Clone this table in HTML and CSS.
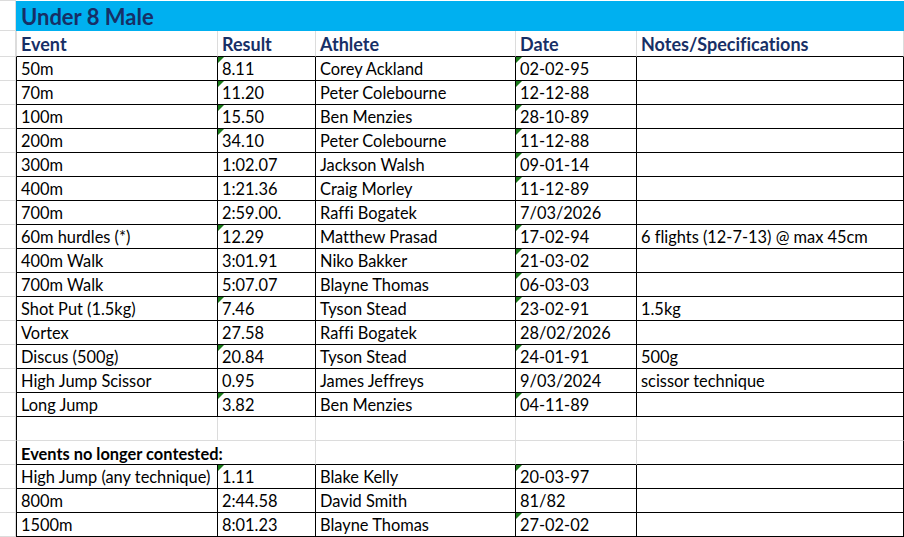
FILE: index.html
```html
<!DOCTYPE html>
<html>
<head>
<meta charset="utf-8">
<link rel="stylesheet" href="styles.css">
</head>
<body>
<div class="sheet">
  <div class="strip top"></div>
  <div class="title">Under 8 Male</div>

  <div class="strip"></div>
  <div class="hd first">Event</div>
  <div class="hd">Result</div>
  <div class="hd">Athlete</div>
  <div class="hd">Date</div>
  <div class="hd last">Notes/Specifications</div>

  <div class="strip"></div><div class="c first">50m</div><div class="c tri">8.11</div><div class="c">Corey Ackland</div><div class="c tri">02-02-95</div><div class="c last"></div>
  <div class="strip"></div><div class="c first">70m</div><div class="c tri">11.20</div><div class="c">Peter Colebourne</div><div class="c tri">12-12-88</div><div class="c last"></div>
  <div class="strip"></div><div class="c first">100m</div><div class="c tri">15.50</div><div class="c">Ben Menzies</div><div class="c tri">28-10-89</div><div class="c last"></div>
  <div class="strip"></div><div class="c first">200m</div><div class="c tri">34.10</div><div class="c">Peter Colebourne</div><div class="c tri">11-12-88</div><div class="c last"></div>
  <div class="strip"></div><div class="c first">300m</div><div class="c">1:02.07</div><div class="c">Jackson Walsh</div><div class="c tri">09-01-14</div><div class="c last"></div>
  <div class="strip"></div><div class="c first">400m</div><div class="c">1:21.36</div><div class="c">Craig Morley</div><div class="c tri">11-12-89</div><div class="c last"></div>
  <div class="strip"></div><div class="c first">700m</div><div class="c">2:59.00.</div><div class="c">Raffi Bogatek</div><div class="c">7/03/2026</div><div class="c last"></div>
  <div class="strip"></div><div class="c first">60m hurdles (*)</div><div class="c tri">12.29</div><div class="c">Matthew Prasad</div><div class="c tri">17-02-94</div><div class="c last">6 flights (12-7-13) @ max 45cm</div>
  <div class="strip"></div><div class="c first">400m Walk</div><div class="c">3:01.91</div><div class="c">Niko Bakker</div><div class="c tri">21-03-02</div><div class="c last"></div>
  <div class="strip"></div><div class="c first">700m Walk</div><div class="c">5:07.07</div><div class="c">Blayne Thomas</div><div class="c tri">06-03-03</div><div class="c last"></div>
  <div class="strip"></div><div class="c first">Shot Put (1.5kg)</div><div class="c tri">7.46</div><div class="c">Tyson Stead</div><div class="c tri">23-02-91</div><div class="c last">1.5kg</div>
  <div class="strip"></div><div class="c first">Vortex</div><div class="c">27.58</div><div class="c">Raffi Bogatek</div><div class="c">28/02/2026</div><div class="c last"></div>
  <div class="strip"></div><div class="c first">Discus (500g)</div><div class="c tri">20.84</div><div class="c">Tyson Stead</div><div class="c tri">24-01-91</div><div class="c last">500g</div>
  <div class="strip"></div><div class="c first">High Jump Scissor</div><div class="c">0.95</div><div class="c">James Jeffreys</div><div class="c">9/03/2024</div><div class="c last">scissor technique</div>
  <div class="strip"></div><div class="c first">Long Jump</div><div class="c tri">3.82</div><div class="c">Ben Menzies</div><div class="c tri">04-11-89</div><div class="c last"></div>

  <div class="strip"></div><div class="e first"></div><div class="e"></div><div class="e"></div><div class="e"></div><div class="e last"></div>

  <div class="strip"></div><div class="sub first">Events no longer contested:</div><div class="sub g"></div><div class="sub g"></div><div class="sub g last"></div>

  <div class="strip"></div><div class="c first">High Jump (any technique)</div><div class="c tri">1.11</div><div class="c">Blake Kelly</div><div class="c tri">20-03-97</div><div class="c last"></div>
  <div class="strip"></div><div class="c first">800m</div><div class="c">2:44.58</div><div class="c">David Smith</div><div class="c">81/82</div><div class="c last"></div>
  <div class="strip"></div><div class="c first">1500m</div><div class="c">8:01.23</div><div class="c">Blayne Thomas</div><div class="c tri">27-02-02</div><div class="c last"></div>
</div>
</body>
</html>
```

FILE: styles.css
```css
* { box-sizing: border-box; }
html, body { margin: 0; padding: 0; background: #fff; }
body {
  font-family: Lato, "Open Sans", sans-serif;
  color: #000;
  font-variant-ligatures: none;
}

.sheet {
  display: grid;
  grid-template-columns: 16px 201px 98px 200px 121px 268px;
  grid-auto-rows: 24px;
  grid-template-rows: 31px 26px;
  width: 904px;
}

.strip { border-bottom: 1px solid #dcdcdc; border-right: 1px solid #dcdcdc; }
.strip.top { border-top: 1px solid #dcdcdc; }

.title {
  grid-column: 2 / span 5;
  margin-top: 1px;
  background: #00b0f0;
  color: #172f66;
  font-weight: 700;
  font-size: 22px;
  line-height: 30px;
  padding-top: 1px;
  padding-left: 5px;
}

.hd {
  border-left: 1px solid #dcdcdc;
  border-bottom: 1px solid #000;
  color: #172f66;
  font-weight: 700;
  font-size: 18px;
  line-height: 25px;
  padding-top: 1px;
  padding-left: 4px;
  white-space: nowrap;
}
.hd.last { border-right: 1px solid #dcdcdc; }

.c {
  position: relative;
  border-left: 1px solid #000;
  border-bottom: 1px solid #000;
  font-size: 16.4px;
  line-height: 23px;
  padding-left: 4px;
  white-space: nowrap;
  overflow: hidden;
}
.c.last, .e.last, .sub.last { border-right: 1px solid #000; }

.tri::before {
  content: "";
  position: absolute;
  left: 0;
  top: 0;
  border-top: 6px solid #1a7a1a;
  border-right: 6px solid transparent;
}

.e {
  border-left: 1px solid #dcdcdc;
  border-bottom: 1px solid #dcdcdc;
}
.e.first { border-left-color: #000; }

.sub {
  border-left: 1px solid #dcdcdc;
  border-bottom: 1px solid #000;
}
.sub.first {
  grid-column: span 2;
  border-left-color: #000;
  font-weight: 700;
  font-size: 16.4px;
  line-height: 23px;
  padding-top: 1px;
  padding-left: 4px;
  white-space: nowrap;
}
```
